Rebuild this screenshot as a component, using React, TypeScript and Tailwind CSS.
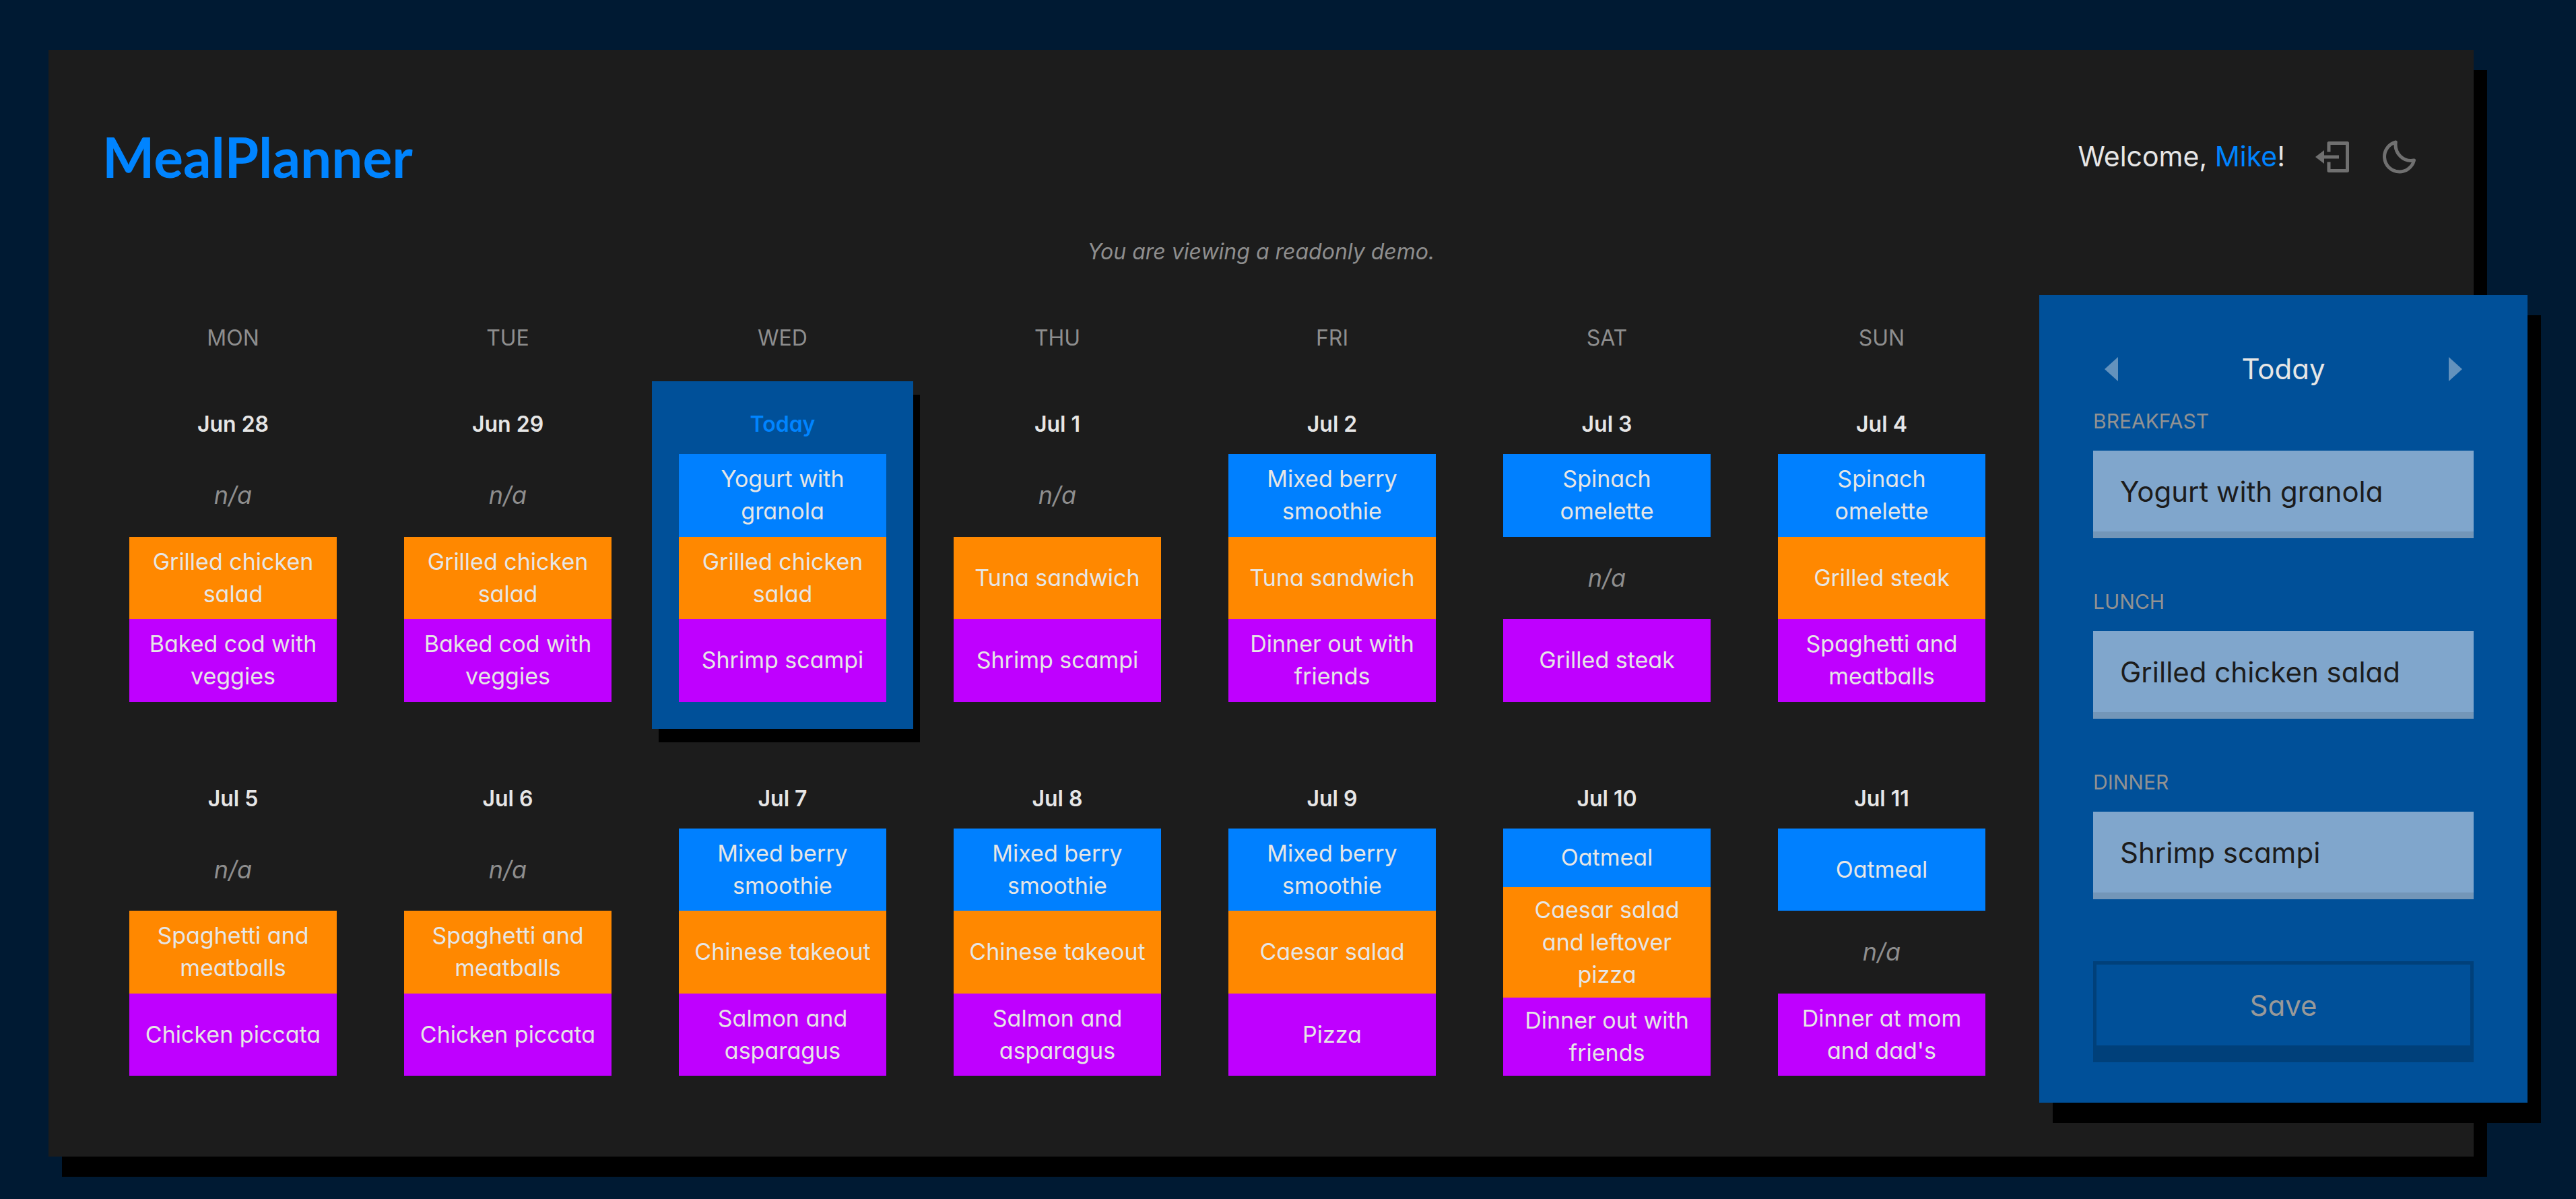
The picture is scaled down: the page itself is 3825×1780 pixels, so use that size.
type Day = { label: string; meals: (string | null)[]; today?: boolean };

const weekdays = ['MON', 'TUE', 'WED', 'THU', 'FRI', 'SAT', 'SUN'];

const days: Day[] = [
  { label: 'Jun 28', meals: [null, 'Grilled chicken salad', 'Baked cod with veggies'] },
  { label: 'Jun 29', meals: [null, 'Grilled chicken salad', 'Baked cod with veggies'] },
  { label: 'Today', meals: ['Yogurt with granola', 'Grilled chicken salad', 'Shrimp scampi'], today: true },
  { label: 'Jul 1', meals: [null, 'Tuna sandwich', 'Shrimp scampi'] },
  { label: 'Jul 2', meals: ['Mixed berry smoothie', 'Tuna sandwich', 'Dinner out with friends'] },
  { label: 'Jul 3', meals: ['Spinach omelette', null, 'Grilled steak'] },
  { label: 'Jul 4', meals: ['Spinach omelette', 'Grilled steak', 'Spaghetti and meatballs'] },
  { label: 'Jul 5', meals: [null, 'Spaghetti and meatballs', 'Chicken piccata'] },
  { label: 'Jul 6', meals: [null, 'Spaghetti and meatballs', 'Chicken piccata'] },
  { label: 'Jul 7', meals: ['Mixed berry smoothie', 'Chinese takeout', 'Salmon and asparagus'] },
  { label: 'Jul 8', meals: ['Mixed berry smoothie', 'Chinese takeout', 'Salmon and asparagus'] },
  { label: 'Jul 9', meals: ['Mixed berry smoothie', 'Caesar salad', 'Pizza'] },
  { label: 'Jul 10', meals: ['Oatmeal', 'Caesar salad and leftover pizza', 'Dinner out with friends'] },
  { label: 'Jul 11', meals: ['Oatmeal', null, "Dinner at mom and dad's"] },
];

const mealColors = ['bg-[#0080ff]', 'bg-[#ff8800]', 'bg-[#bf00ff]'];

const fields = [
  { id: 'breakfast', label: 'BREAKFAST', value: 'Yogurt with granola' },
  { id: 'lunch', label: 'LUNCH', value: 'Grilled chicken salad' },
  { id: 'dinner', label: 'DINNER', value: 'Shrimp scampi' },
];

function LogoutIcon() {
  return (
    <svg viewBox="0 0 60 60" className="size-full" fill="none" stroke="currentColor" strokeWidth="5" strokeLinejoin="round" aria-hidden="true">
      <path d="M25 23.5V10.5H52.5V51.5H25V38.5" />
      <path d="M17 31H40" />
      <path d="M5 31L18 21V41Z" fill="currentColor" stroke="none" />
    </svg>
  );
}

function MoonIcon() {
  return (
    <svg viewBox="0 0 60 60" className="size-full" fill="none" stroke="currentColor" strokeWidth="5" strokeLinejoin="round" aria-hidden="true">
      <path d="M24.3 9A22.3 22.3 0 1 0 51.5 36C36 39 22 26 24.3 9Z" />
    </svg>
  );
}

function Header() {
  return (
    <header className="flex items-center justify-between py-[18px]">
      <h1 className="font-['Lato',sans-serif] text-[82px] leading-[120px] font-bold text-[#0084ff]">MealPlanner</h1>
      <div className="flex items-center gap-10">
        <p className="text-[41px] leading-[60px]">
          Welcome, <span className="text-[#0084ff]">Mike</span>!
        </p>
        <button type="button" aria-label="Log out" className="size-15 text-[#707070]">
          <LogoutIcon />
        </button>
        <button type="button" aria-label="Dark mode" className="size-15 text-[#707070]">
          <MoonIcon />
        </button>
      </div>
    </header>
  );
}

function DayCard({ day }: { day: Day }) {
  return (
    <article className={day.today ? 'flex flex-col bg-[#005099] p-10 shadow-[10px_20px_0_#000]' : 'flex flex-col p-10'}>
      <h2 className={day.today ? 'mb-5 text-[32px] leading-[48px] font-semibold text-[#0084ff]' : 'mb-5 text-[32px] leading-[48px] font-semibold'}>
        {day.label}
      </h2>
      {day.meals.map((meal, i) =>
        meal ? (
          <div key={i} className={`flex flex-1 items-center justify-center px-5 py-2.5 text-[34px] leading-[48px] ${mealColors[i]}`}>
            {meal}
          </div>
        ) : (
          <div key={i} className="flex flex-1 items-center justify-center px-5 py-2.5 text-[36px] leading-[48px] text-[#8e8e8e] italic">
            n/a
          </div>
        ),
      )}
    </article>
  );
}

function Calendar() {
  return (
    <section aria-label="Calendar" className="flex flex-1 flex-col text-center">
      <div className="grid grid-cols-7 gap-x-5 py-10 text-[32px] leading-[48px] text-[#8e8e8e]">
        {weekdays.map((name) => (
          <div key={name}>{name}</div>
        ))}
      </div>
      <div className="grid flex-1 grid-cols-7 grid-rows-2 gap-x-5 gap-y-10">
        {days.map((day) => (
          <DayCard key={day.label} day={day} />
        ))}
      </div>
    </section>
  );
}

function DayEditor() {
  return (
    <aside className="-mr-40 w-[725px] shrink-0 bg-[#005099] px-20 py-15 shadow-[20px_30px_0_#000]">
      <div className="flex items-center justify-between px-4 pt-5 pb-[23px]">
        <button type="button" aria-label="Previous day" className="text-[#6392bd]">
          <svg viewBox="0 0 22 36" className="h-9 w-[22px]" fill="currentColor" aria-hidden="true">
            <path d="M1 18L21 0V36Z" />
          </svg>
        </button>
        <h2 className="text-[42px] leading-[60px]">Today</h2>
        <button type="button" aria-label="Next day" className="text-[#6392bd]">
          <svg viewBox="0 0 22 36" className="h-9 w-[22px]" fill="currentColor" aria-hidden="true">
            <path d="M21 18L1 0V36Z" />
          </svg>
        </button>
      </div>
      <form className="flex flex-col" onSubmit={(e) => e.preventDefault()}>
        <div className="flex flex-col gap-[70px]">
          {fields.map((f) => (
            <div key={f.id} className="flex flex-col gap-5">
              <label htmlFor={f.id} className="text-[30px] leading-[48px] text-[#929292]">
                {f.label}
              </label>
              <input
                id={f.id}
                type="text"
                readOnly
                defaultValue={f.value}
                className="h-[130px] w-full border-b-10 border-[#7396b8] bg-[#80a6cc] px-10 text-[42px] text-[#1c1c1c] outline-none"
              />
            </div>
          ))}
        </div>
        <button type="submit" className="mt-[92px] h-[150px] border-5 border-b-25 border-[#00407a] text-[42px] text-[#999999]">
          Save
        </button>
      </form>
    </aside>
  );
}

export default function App() {
  return (
    <div className="min-h-screen bg-[#001a33] pt-[74px] pr-[152px] pb-[63px] pl-[72px] font-['Inter',sans-serif] text-[#e6e6e6] [font-feature-settings:'cv11']">
      <main className="bg-[#1c1c1c] p-20 shadow-[20px_30px_0_#000]">
        <Header />
        <p className="my-10 text-center text-[32px] leading-[48px] text-[#8e8e8e] italic">You are viewing a readonly demo.</p>
        <div className="flex gap-10">
          <Calendar />
          <DayEditor />
        </div>
      </main>
    </div>
  );
}
